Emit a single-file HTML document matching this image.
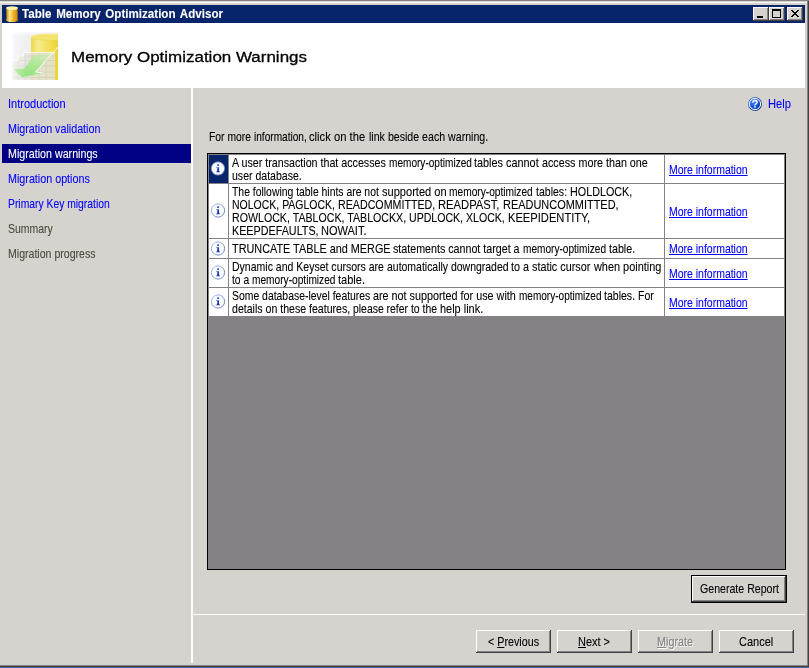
<!DOCTYPE html>
<html><head><meta charset="utf-8"><title>Table Memory Optimization Advisor</title>
<style>
html,body{margin:0;padding:0}
body{width:809px;height:668px;position:relative;overflow:hidden;background:#d6d3ce;font-family:"Liberation Sans",sans-serif}
.abs{position:absolute;display:block}
.t{position:absolute;display:block;white-space:pre;transform-origin:0 0;-webkit-text-stroke:.1px currentColor;}
.t u{text-decoration:underline;text-underline-offset:1px;text-decoration-thickness:1px}
</style></head><body>

<div class="abs" style="left:0;top:0;width:809px;height:1px;background:#848284"></div>
<div class="abs" style="left:0;top:2px;width:807px;height:1px;background:#fff"></div>
<div class="abs" style="left:807px;top:1px;width:1px;height:665px;background:#848284"></div>
<div class="abs" style="left:808px;top:1px;width:1px;height:666px;background:#424142"></div>
<div class="abs" style="left:0;top:665px;width:808px;height:1px;background:#848284"></div>
<div class="abs" style="left:0;top:666px;width:809px;height:1px;background:#424142"></div>
<div class="abs" style="left:0;top:667px;width:809px;height:1px;background:#396da5"></div>
<div class="abs" style="left:2px;top:5px;width:803px;height:18px;background:#08246b"></div>
<svg class="abs" style="left:6px;top:6px" width="12" height="16" viewBox="0 0 12 16"><defs><linearGradient id="cy" x1="0" x2="1" y1="0" y2="0"><stop offset="0" stop-color="#c98a10"/><stop offset=".3" stop-color="#ffe98c"/><stop offset=".6" stop-color="#f2b830"/><stop offset="1" stop-color="#cf8800"/></linearGradient></defs><path d="M.4 2V14A5.600 2 0 0 0 11.600 14V2Z" fill="url(#cy)"/><ellipse cx="6" cy="2.100" rx="6" ry="1.900" fill="#fff2ac"/><ellipse cx="6" cy="14.100" rx="6" ry="1.700" fill="url(#cy)"/></svg>
<div class="abs" style="left:753px;top:7px;width:16px;height:14px;background:#424142"></div><div class="abs" style="left:753px;top:7px;width:15px;height:13px;background:#fff"></div><div class="abs" style="left:754px;top:8px;width:14px;height:12px;background:#848284"></div><div class="abs" style="left:754px;top:8px;width:13px;height:11px;background:#d6d3ce"></div>
<div class="abs" style="left:769px;top:7px;width:16px;height:14px;background:#424142"></div><div class="abs" style="left:769px;top:7px;width:15px;height:13px;background:#fff"></div><div class="abs" style="left:770px;top:8px;width:14px;height:12px;background:#848284"></div><div class="abs" style="left:770px;top:8px;width:13px;height:11px;background:#d6d3ce"></div>
<div class="abs" style="left:787px;top:7px;width:16px;height:14px;background:#424142"></div><div class="abs" style="left:787px;top:7px;width:15px;height:13px;background:#fff"></div><div class="abs" style="left:788px;top:8px;width:14px;height:12px;background:#848284"></div><div class="abs" style="left:788px;top:8px;width:13px;height:11px;background:#d6d3ce"></div>
<div class="abs" style="left:757px;top:16px;width:6px;height:2px;background:#000"></div>
<div class="abs" style="left:772px;top:9px;width:9px;height:9px;box-sizing:border-box;border:1px solid #000;border-top-width:2px"></div>
<svg class="abs" style="left:791px;top:10px" width="8" height="7" viewBox="0 0 8 7" shape-rendering="crispEdges"><path d="M0 0h2v1h1v1h2v-1h1v-1h2v1h-1v1h-1v1h-1v1h1v1h1v1h1v1h-2v-1h-1v-1h-2v1h-1v1h-2v-1h1v-1h1v-1h1v-1h-1v-1h-1v-1h-1z" fill="#000"/></svg>
<div class="abs" style="left:2px;top:23px;width:803px;height:65px;background:#fff"></div>
<svg class="abs" style="left:11px;top:32px" width="48" height="48" viewBox="0 0 48 48"><defs>
<linearGradient id="hc" x1="0" x2="1" y1="0" y2="0"><stop offset="0" stop-color="#ecd640"/><stop offset=".18" stop-color="#f6ec8c"/><stop offset=".5" stop-color="#f2dc50"/><stop offset="1" stop-color="#e6c000"/></linearGradient>
<linearGradient id="hct" x1="0" x2="0" y1="0" y2="1"><stop offset="0" stop-color="#f0de58"/><stop offset="1" stop-color="#f5e87c"/></linearGradient>
<linearGradient id="hfl" x1="0" x2="1" y1="0" y2="0"><stop offset="0" stop-color="#fff" stop-opacity="1"/><stop offset=".12" stop-color="#fff" stop-opacity=".45"/><stop offset=".5" stop-color="#fff" stop-opacity=".12"/><stop offset="1" stop-color="#fff" stop-opacity="0"/></linearGradient>
<linearGradient id="hft" x1="0" x2="0" y1="0" y2="1"><stop offset="0" stop-color="#fff" stop-opacity=".7"/><stop offset=".2" stop-color="#fff" stop-opacity="0"/></linearGradient>
<linearGradient id="har" x1="1" x2="0" y1="0" y2="1"><stop offset="0" stop-color="#e0f4c8" stop-opacity=".4"/><stop offset=".45" stop-color="#a2e888" stop-opacity=".85"/><stop offset="1" stop-color="#76da5a"/></linearGradient>
<filter id="hb" x="-10%" y="-10%" width="120%" height="120%"><feGaussianBlur stdDeviation=".55"/></filter>
<clipPath id="hcl"><rect x="0" y="0" width="47" height="48"/></clipPath>
</defs>
<g clip-path="url(#hcl)" filter="url(#hb)">
<rect x="1" y="0" width="46" height="48" fill="#eeeef1"/>
<path d="M20 4.900V50H60V4.900Z" fill="url(#hc)"/>
<ellipse cx="40" cy="4.900" rx="20" ry="3.400" fill="url(#hct)"/>
<path d="M20 5.300A20 3.400 0 0 0 47 8.100" fill="none" stroke="#e8d040" stroke-width=".8" opacity=".7"/>
<g opacity=".86">
<path d="M1 28.500H7V24H12.500V20.500H44V48H1Z" fill="#e3e2d8"/>
<path d="M7 28.500V48M14 24V48M21 20.500V48M28 20.500V48M35 20.500V48M1 34H44M1 40H44M1 45.500H44M7 28.500H44M12.500 24H44" stroke="#d2d1c6" stroke-width="1" fill="none"/>
<path d="M1 28.500H7V24H12.500V20.500H44" stroke="#fafaf4" stroke-width="1.200" fill="none"/>
</g>
<path d="M22.500 23.800L39.500 20.800L43.500 20.600L24.600 40L31.800 41L11 45.400L2.400 37.200L13.400 36.400Z" fill="url(#har)"/>
<path d="M47.500 14.500L24.600 40L31.800 41" fill="none" stroke="#fff" stroke-width="1" opacity=".9"/>
<path d="M2.400 37.200L11 45.400L31.800 41" fill="none" stroke="#b8eea8" stroke-width=".8" opacity=".8"/>
<rect x="0" y="0" width="30" height="48" fill="url(#hfl)"/>
<rect x="0" y="0" width="48" height="20" fill="url(#hft)"/>
</g></svg>

<div class="abs" style="left:191px;top:88px;width:2px;height:575px;background:#fff"></div>
<div class="abs" style="left:2px;top:144px;width:189px;height:19px;background:#000084"></div>
<div class="abs" style="left:193px;top:614px;width:612px;height:1px;background:#fff"></div>
<svg class="abs" style="left:747px;top:96px" width="16" height="16" viewBox="0 0 16 16"><defs><radialGradient id="hg" cx=".35" cy=".3" r=".8"><stop offset="0" stop-color="#4a8cff"/><stop offset=".6" stop-color="#1550d8"/><stop offset="1" stop-color="#0a2c9c"/></radialGradient><linearGradient id="ho" x1="0" y1="0" x2="1" y2="1"><stop offset="0" stop-color="#5a8cf0"/><stop offset="1" stop-color="#0c2890"/></linearGradient></defs><circle cx="8" cy="8" r="7" fill="url(#ho)"/><circle cx="8" cy="8" r="5.6" fill="url(#hg)" stroke="#fff" stroke-width="1"/><path d="M5.9 6.6Q5.9 4.6 8 4.6T10.1 6.3Q10.1 7.3 9 7.9T8 9.4" fill="none" stroke="#fff" stroke-width="1.5"/><rect x="7.2" y="10.2" width="1.6" height="1.5" fill="#fff"/></svg>
<div class="abs" style="left:207px;top:153px;width:579px;height:417px;background:#000"></div>
<div class="abs" style="left:208px;top:154px;width:577px;height:415px;background:#848284"></div>
<div class="abs" style="left:209px;top:155px;width:19px;height:28px;background:#08246b"></div>
<div class="abs" style="left:229px;top:155px;width:435px;height:28px;background:#fff"></div>
<div class="abs" style="left:665px;top:155px;width:119px;height:28px;background:#fff"></div>
<svg class="abs" style="left:210px;top:161px" width="16" height="16" viewBox="0 0 16 16"><defs><linearGradient id="ig0" x1="0" y1="0" x2="1" y2="1"><stop offset="0" stop-color="#9dbaf4"/><stop offset="1" stop-color="#4f6aa8"/></linearGradient><linearGradient id="ii0" x1="0" y1="0" x2="0" y2="1"><stop offset="0" stop-color="#2c5adc"/><stop offset="1" stop-color="#0a1ea4"/></linearGradient></defs><circle cx="8" cy="7.500" r="6.600" fill="#fff" stroke="url(#ig0)" stroke-width=".9"/><rect x="7.100" y="3.300" width="2" height="1.800" rx=".5" fill="#2c5adc"/><path d="M6.300 6.200h2.800v4.300h.9v.8h-3.700v-.8h.9v-3.500h-.9z" fill="url(#ii0)"/></svg>
<div class="abs" style="left:209px;top:184px;width:19px;height:54px;background:#fff"></div>
<div class="abs" style="left:229px;top:184px;width:435px;height:54px;background:#fff"></div>
<div class="abs" style="left:665px;top:184px;width:119px;height:54px;background:#fff"></div>
<svg class="abs" style="left:210px;top:203px" width="16" height="16" viewBox="0 0 16 16"><defs><linearGradient id="ig1" x1="0" y1="0" x2="1" y2="1"><stop offset="0" stop-color="#9dbaf4"/><stop offset="1" stop-color="#4f6aa8"/></linearGradient><linearGradient id="ii1" x1="0" y1="0" x2="0" y2="1"><stop offset="0" stop-color="#2c5adc"/><stop offset="1" stop-color="#0a1ea4"/></linearGradient></defs><circle cx="8" cy="7.500" r="6.600" fill="#fff" stroke="url(#ig1)" stroke-width=".9"/><rect x="7.100" y="3.300" width="2" height="1.800" rx=".5" fill="#2c5adc"/><path d="M6.300 6.200h2.800v4.300h.9v.8h-3.700v-.8h.9v-3.500h-.9z" fill="url(#ii1)"/></svg>
<div class="abs" style="left:209px;top:239px;width:19px;height:19px;background:#fff"></div>
<div class="abs" style="left:229px;top:239px;width:435px;height:19px;background:#fff"></div>
<div class="abs" style="left:665px;top:239px;width:119px;height:19px;background:#fff"></div>
<svg class="abs" style="left:210px;top:241px" width="16" height="16" viewBox="0 0 16 16"><defs><linearGradient id="ig2" x1="0" y1="0" x2="1" y2="1"><stop offset="0" stop-color="#9dbaf4"/><stop offset="1" stop-color="#4f6aa8"/></linearGradient><linearGradient id="ii2" x1="0" y1="0" x2="0" y2="1"><stop offset="0" stop-color="#2c5adc"/><stop offset="1" stop-color="#0a1ea4"/></linearGradient></defs><circle cx="8" cy="7.500" r="6.600" fill="#fff" stroke="url(#ig2)" stroke-width=".9"/><rect x="7.100" y="3.300" width="2" height="1.800" rx=".5" fill="#2c5adc"/><path d="M6.300 6.200h2.800v4.300h.9v.8h-3.700v-.8h.9v-3.500h-.9z" fill="url(#ii2)"/></svg>
<div class="abs" style="left:209px;top:259px;width:19px;height:28px;background:#fff"></div>
<div class="abs" style="left:229px;top:259px;width:435px;height:28px;background:#fff"></div>
<div class="abs" style="left:665px;top:259px;width:119px;height:28px;background:#fff"></div>
<svg class="abs" style="left:210px;top:265px" width="16" height="16" viewBox="0 0 16 16"><defs><linearGradient id="ig3" x1="0" y1="0" x2="1" y2="1"><stop offset="0" stop-color="#9dbaf4"/><stop offset="1" stop-color="#4f6aa8"/></linearGradient><linearGradient id="ii3" x1="0" y1="0" x2="0" y2="1"><stop offset="0" stop-color="#2c5adc"/><stop offset="1" stop-color="#0a1ea4"/></linearGradient></defs><circle cx="8" cy="7.500" r="6.600" fill="#fff" stroke="url(#ig3)" stroke-width=".9"/><rect x="7.100" y="3.300" width="2" height="1.800" rx=".5" fill="#2c5adc"/><path d="M6.300 6.200h2.800v4.300h.9v.8h-3.700v-.8h.9v-3.500h-.9z" fill="url(#ii3)"/></svg>
<div class="abs" style="left:209px;top:288px;width:19px;height:28px;background:#fff"></div>
<div class="abs" style="left:229px;top:288px;width:435px;height:28px;background:#fff"></div>
<div class="abs" style="left:665px;top:288px;width:119px;height:28px;background:#fff"></div>
<svg class="abs" style="left:210px;top:294px" width="16" height="16" viewBox="0 0 16 16"><defs><linearGradient id="ig4" x1="0" y1="0" x2="1" y2="1"><stop offset="0" stop-color="#9dbaf4"/><stop offset="1" stop-color="#4f6aa8"/></linearGradient><linearGradient id="ii4" x1="0" y1="0" x2="0" y2="1"><stop offset="0" stop-color="#2c5adc"/><stop offset="1" stop-color="#0a1ea4"/></linearGradient></defs><circle cx="8" cy="7.500" r="6.600" fill="#fff" stroke="url(#ig4)" stroke-width=".9"/><rect x="7.100" y="3.300" width="2" height="1.800" rx=".5" fill="#2c5adc"/><path d="M6.300 6.200h2.800v4.300h.9v.8h-3.700v-.8h.9v-3.500h-.9z" fill="url(#ii4)"/></svg>
<div class="abs" style="left:691px;top:575px;width:96px;height:28px;background:#000"></div><div class="abs" style="left:692px;top:576px;width:94px;height:26px;background:#424142"></div><div class="abs" style="left:692px;top:576px;width:93px;height:25px;background:#fff"></div><div class="abs" style="left:693px;top:577px;width:92px;height:24px;background:#848284"></div><div class="abs" style="left:693px;top:577px;width:91px;height:23px;background:#d6d3ce"></div>
<div class="abs" style="left:476px;top:630px;width:75px;height:23px;background:#424142"></div><div class="abs" style="left:476px;top:630px;width:74px;height:22px;background:#fff"></div><div class="abs" style="left:477px;top:631px;width:73px;height:21px;background:#848284"></div><div class="abs" style="left:477px;top:631px;width:72px;height:20px;background:#d6d3ce"></div>
<div class="abs" style="left:557px;top:630px;width:75px;height:23px;background:#424142"></div><div class="abs" style="left:557px;top:630px;width:74px;height:22px;background:#fff"></div><div class="abs" style="left:558px;top:631px;width:73px;height:21px;background:#848284"></div><div class="abs" style="left:558px;top:631px;width:72px;height:20px;background:#d6d3ce"></div>
<div class="abs" style="left:638px;top:630px;width:75px;height:23px;background:#424142"></div><div class="abs" style="left:638px;top:630px;width:74px;height:22px;background:#fff"></div><div class="abs" style="left:639px;top:631px;width:73px;height:21px;background:#848284"></div><div class="abs" style="left:639px;top:631px;width:72px;height:20px;background:#d6d3ce"></div>
<div class="abs" style="left:719px;top:630px;width:75px;height:23px;background:#424142"></div><div class="abs" style="left:719px;top:630px;width:74px;height:22px;background:#fff"></div><div class="abs" style="left:720px;top:631px;width:73px;height:21px;background:#848284"></div><div class="abs" style="left:720px;top:631px;width:72px;height:20px;background:#d6d3ce"></div>
<span class="t" style="left:21.50px;top:5.84px;font-size:12px;line-height:16px;font-weight:bold;color:#fff;transform:scaleX(0.9655);word-spacing:1.6px;">Table Memory Optimization Advisor</span>
<span class="t" style="left:70.80px;top:46.73px;font-size:15.2px;line-height:20px;font-weight:normal;color:#000;transform:scaleX(1.1170);-webkit-text-stroke:.3px #000;">Memory Optimization Warnings</span>
<span class="t" style="left:7.80px;top:95.00px;font-size:13px;line-height:17px;font-weight:normal;color:#0000ff;transform:scaleX(0.8478);">Introduction</span>
<span class="t" style="left:7.80px;top:120.00px;font-size:13px;line-height:17px;font-weight:normal;color:#0000ff;transform:scaleX(0.8249);">Migration validation</span>
<span class="t" style="left:7.80px;top:145.00px;font-size:13px;line-height:17px;font-weight:normal;color:#fff;transform:scaleX(0.8221);">Migration warnings</span>
<span class="t" style="left:7.80px;top:170.00px;font-size:13px;line-height:17px;font-weight:normal;color:#0000ff;transform:scaleX(0.8263);">Migration options</span>
<span class="t" style="left:7.80px;top:195.00px;font-size:13px;line-height:17px;font-weight:normal;color:#0000ff;transform:scaleX(0.7953);">Primary Key migration</span>
<span class="t" style="left:7.80px;top:220.00px;font-size:13px;line-height:17px;font-weight:normal;color:#4a4a3e;transform:scaleX(0.8054);">Summary</span>
<span class="t" style="left:7.80px;top:245.00px;font-size:13px;line-height:17px;font-weight:normal;color:#4a4a3e;transform:scaleX(0.8128);">Migration progress</span>
<span class="t" style="left:767.80px;top:95.00px;font-size:13px;line-height:17px;font-weight:normal;color:#0000ff;transform:scaleX(0.8598);">Help</span>
<span class="t" style="left:208.80px;top:128.00px;font-size:13px;line-height:17px;font-weight:normal;color:#000;transform:scaleX(0.7969);">For more </span>
<span class="t" style="left:253.70px;top:128.00px;font-size:13px;line-height:17px;font-weight:normal;color:#000;transform:scaleX(0.7771);">information, </span>
<span class="t" style="left:309.30px;top:128.00px;font-size:13px;line-height:17px;font-weight:normal;color:#000;transform:scaleX(0.8637);">click on the </span>
<span class="t" style="left:368.60px;top:128.00px;font-size:13px;line-height:17px;font-weight:normal;color:#000;transform:scaleX(0.8165);">link beside each warning.</span>
<span class="t" style="left:231.80px;top:154.00px;font-size:13px;line-height:17px;font-weight:normal;color:#000;transform:scaleX(0.8219);">A user transaction that accesses </span>
<span class="t" style="left:388.60px;top:154.00px;font-size:13px;line-height:17px;font-weight:normal;color:#000;transform:scaleX(0.7753);">memory-optimized </span>
<span class="t" style="left:474.30px;top:154.00px;font-size:13px;line-height:17px;font-weight:normal;color:#000;transform:scaleX(0.8363);">tables cannot </span>
<span class="t" style="left:542.00px;top:154.00px;font-size:13px;line-height:17px;font-weight:normal;color:#000;transform:scaleX(0.8272);">access more than one</span>
<span class="t" style="left:231.80px;top:167.00px;font-size:13px;line-height:17px;font-weight:normal;color:#000;transform:scaleX(0.8103);">user database.</span>
<span class="t" style="left:231.80px;top:183.00px;font-size:13px;line-height:17px;font-weight:normal;color:#000;transform:scaleX(0.7998);">The following table hints are not </span>
<span class="t" style="left:381.50px;top:183.00px;font-size:13px;line-height:17px;font-weight:normal;color:#000;transform:scaleX(0.8514);">supported on </span>
<span class="t" style="left:449.20px;top:183.00px;font-size:13px;line-height:17px;font-weight:normal;color:#000;transform:scaleX(0.7835);">memory-optimized </span>
<span class="t" style="left:535.80px;top:183.00px;font-size:13px;line-height:17px;font-weight:normal;color:#000;transform:scaleX(0.8110);">tables: </span>
<span class="t" style="left:569.80px;top:183.00px;font-size:13px;line-height:17px;font-weight:normal;color:#000;transform:scaleX(0.8291);">HOLDLOCK,</span>
<span class="t" style="left:231.80px;top:196.00px;font-size:13px;line-height:17px;font-weight:normal;color:#000;transform:scaleX(0.8069);">NOLOCK, PAGLOCK, </span>
<span class="t" style="left:337.70px;top:196.00px;font-size:13px;line-height:17px;font-weight:normal;color:#000;transform:scaleX(0.8209);">READCOMMITTED, </span>
<span class="t" style="left:437.90px;top:196.00px;font-size:13px;line-height:17px;font-weight:normal;color:#000;transform:scaleX(0.8626);">READPAST, </span>
<span class="t" style="left:502.50px;top:196.00px;font-size:13px;line-height:17px;font-weight:normal;color:#000;transform:scaleX(0.8425);">READUNCOMMITTED,</span>
<span class="t" style="left:231.80px;top:209.00px;font-size:13px;line-height:17px;font-weight:normal;color:#000;transform:scaleX(0.8181);">ROWLOCK, TABLOCK, TABLOCKX, </span>
<span class="t" style="left:408.90px;top:209.00px;font-size:13px;line-height:17px;font-weight:normal;color:#000;transform:scaleX(0.8132);">UPDLOCK, XLOCK, </span>
<span class="t" style="left:507.60px;top:209.00px;font-size:13px;line-height:17px;font-weight:normal;color:#000;transform:scaleX(0.8576);">KEEPIDENTITY,</span>
<span class="t" style="left:231.80px;top:222.00px;font-size:13px;line-height:17px;font-weight:normal;color:#000;transform:scaleX(0.8286);">KEEPDEFAULTS, </span>
<span class="t" style="left:321.40px;top:222.00px;font-size:13px;line-height:17px;font-weight:normal;color:#000;transform:scaleX(0.8475);">NOWAIT.</span>
<span class="t" style="left:231.80px;top:240.00px;font-size:13px;line-height:17px;font-weight:normal;color:#000;transform:scaleX(0.8347);">TRUNCATE TABLE and MERGE </span>
<span class="t" style="left:393.40px;top:240.00px;font-size:13px;line-height:17px;font-weight:normal;color:#000;transform:scaleX(0.8220);">statements cannot target a </span>
<span class="t" style="left:522.90px;top:240.00px;font-size:13px;line-height:17px;font-weight:normal;color:#000;transform:scaleX(0.7763);">memory-optimized </span>
<span class="t" style="left:608.70px;top:240.00px;font-size:13px;line-height:17px;font-weight:normal;color:#000;transform:scaleX(0.8204);">table.</span>
<span class="t" style="left:231.80px;top:258.00px;font-size:13px;line-height:17px;font-weight:normal;color:#000;transform:scaleX(0.8090);">Dynamic and Keyset cursors are </span>
<span class="t" style="left:386.70px;top:258.00px;font-size:13px;line-height:17px;font-weight:normal;color:#000;transform:scaleX(0.8050);">automatically downgraded </span>
<span class="t" style="left:511.20px;top:258.00px;font-size:13px;line-height:17px;font-weight:normal;color:#000;transform:scaleX(0.8314);">to a static cursor </span>
<span class="t" style="left:593.50px;top:258.00px;font-size:13px;line-height:17px;font-weight:normal;color:#000;transform:scaleX(0.8388);">when pointing</span>
<span class="t" style="left:231.80px;top:271.00px;font-size:13px;line-height:17px;font-weight:normal;color:#000;transform:scaleX(0.7906);">to a </span>
<span class="t" style="left:251.80px;top:271.00px;font-size:13px;line-height:17px;font-weight:normal;color:#000;transform:scaleX(0.7808);">memory-optimized </span>
<span class="t" style="left:338.10px;top:271.00px;font-size:13px;line-height:17px;font-weight:normal;color:#000;transform:scaleX(0.8487);">table.</span>
<span class="t" style="left:231.80px;top:287.00px;font-size:13px;line-height:17px;font-weight:normal;color:#000;transform:scaleX(0.8008);">Some database-level features </span>
<span class="t" style="left:373.00px;top:287.00px;font-size:13px;line-height:17px;font-weight:normal;color:#000;transform:scaleX(0.8303);">are not supported for use with </span>
<span class="t" style="left:518.80px;top:287.00px;font-size:13px;line-height:17px;font-weight:normal;color:#000;transform:scaleX(0.7717);">memory-optimized </span>
<span class="t" style="left:604.10px;top:287.00px;font-size:13px;line-height:17px;font-weight:normal;color:#000;transform:scaleX(0.8108);">tables. For</span>
<span class="t" style="left:231.80px;top:300.00px;font-size:13px;line-height:17px;font-weight:normal;color:#000;transform:scaleX(0.8134);">details on these features, </span>
<span class="t" style="left:352.90px;top:300.00px;font-size:13px;line-height:17px;font-weight:normal;color:#000;transform:scaleX(0.8016);">please refer to the </span>
<span class="t" style="left:439.80px;top:300.00px;font-size:13px;line-height:17px;font-weight:normal;color:#000;transform:scaleX(0.8419);">help link.</span>
<span class="t" style="left:668.50px;top:161.00px;font-size:13px;line-height:17px;font-weight:normal;color:#0000ff;transform:scaleX(0.8058);text-decoration:underline;text-underline-offset:1px;text-decoration-thickness:1px;">More information</span>
<span class="t" style="left:668.50px;top:203.00px;font-size:13px;line-height:17px;font-weight:normal;color:#0000ff;transform:scaleX(0.8058);text-decoration:underline;text-underline-offset:1px;text-decoration-thickness:1px;">More information</span>
<span class="t" style="left:668.50px;top:240.00px;font-size:13px;line-height:17px;font-weight:normal;color:#0000ff;transform:scaleX(0.8058);text-decoration:underline;text-underline-offset:1px;text-decoration-thickness:1px;">More information</span>
<span class="t" style="left:668.50px;top:265.00px;font-size:13px;line-height:17px;font-weight:normal;color:#0000ff;transform:scaleX(0.8058);text-decoration:underline;text-underline-offset:1px;text-decoration-thickness:1px;">More information</span>
<span class="t" style="left:668.50px;top:294.00px;font-size:13px;line-height:17px;font-weight:normal;color:#0000ff;transform:scaleX(0.8058);text-decoration:underline;text-underline-offset:1px;text-decoration-thickness:1px;">More information</span>
<span class="t" style="left:487.50px;top:633.00px;font-size:13px;line-height:17px;font-weight:normal;color:#000;transform:scaleX(0.8251);">&lt; <u>P</u>revious</span>
<span class="t" style="left:577.50px;top:633.00px;font-size:13px;line-height:17px;font-weight:normal;color:#000;transform:scaleX(0.8435);"><u>N</u>ext &gt;</span>
<span class="t" style="left:656.50px;top:633.00px;font-size:13px;line-height:17px;font-weight:normal;color:#848284;transform:scaleX(0.8300);text-shadow:1px 1px 0 #fff;"><u>M</u>igrate</span>
<span class="t" style="left:739.30px;top:633.00px;font-size:13px;line-height:17px;font-weight:normal;color:#000;transform:scaleX(0.8476);">Cancel</span>
<span class="t" style="left:699.50px;top:580.00px;font-size:13px;line-height:17px;font-weight:normal;color:#000;transform:scaleX(0.8157);">Generate Report</span>

</body></html>
